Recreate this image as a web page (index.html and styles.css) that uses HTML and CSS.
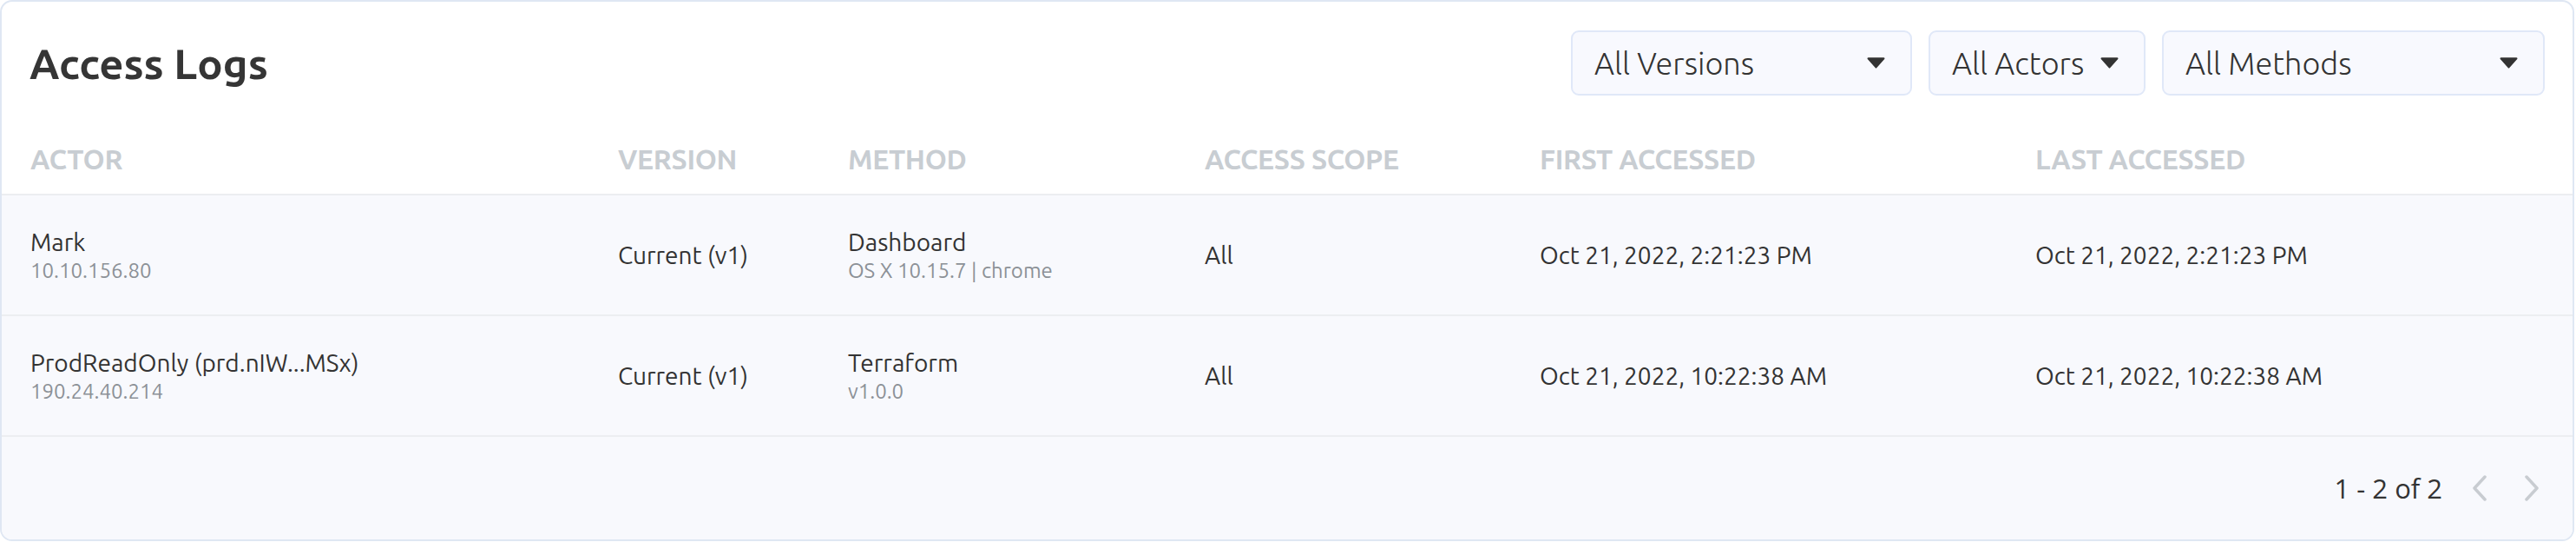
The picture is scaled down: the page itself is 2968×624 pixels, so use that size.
FILE: index.html
```html
<!DOCTYPE html>
<html lang="en">
<head>
<meta charset="utf-8">
<title>Access Logs</title>
<link rel="stylesheet" href="styles.css">
</head>
<body>
<section class="card">
  <header class="toolbar">
    <h1 class="title">Access Logs</h1>
    <div class="filters">
      <div class="select select-versions"><span>All Versions</span><svg class="caret" viewBox="0 0 20 13"><path d="M1.5 1h17a1 1 0 0 1 .8 1.6l-8.5 9.6a1 1 0 0 1-1.6 0L.7 2.6A1 1 0 0 1 1.5 1z"/></svg></div>
      <div class="select select-actors"><span>All Actors</span><svg class="caret" viewBox="0 0 20 13"><path d="M1.5 1h17a1 1 0 0 1 .8 1.6l-8.5 9.6a1 1 0 0 1-1.6 0L.7 2.6A1 1 0 0 1 1.5 1z"/></svg></div>
      <div class="select select-methods"><span>All Methods</span><svg class="caret" viewBox="0 0 20 13"><path d="M1.5 1h17a1 1 0 0 1 .8 1.6l-8.5 9.6a1 1 0 0 1-1.6 0L.7 2.6A1 1 0 0 1 1.5 1z"/></svg></div>
    </div>
  </header>

  <div class="table">
    <div class="row head">
      <div class="cell">ACTOR</div>
      <div class="cell">VERSION</div>
      <div class="cell">METHOD</div>
      <div class="cell">ACCESS SCOPE</div>
      <div class="cell">FIRST ACCESSED</div>
      <div class="cell">LAST ACCESSED</div>
    </div>
    <div class="row data">
      <div class="cell"><div class="main">Mark</div><div class="sub">10.10.156.80</div></div>
      <div class="cell"><div class="main">Current (v1)</div></div>
      <div class="cell"><div class="main">Dashboard</div><div class="sub">OS X 10.15.7 | chrome</div></div>
      <div class="cell"><div class="main">All</div></div>
      <div class="cell"><div class="main">Oct 21, 2022, 2:21:23 PM</div></div>
      <div class="cell"><div class="main">Oct 21, 2022, 2:21:23 PM</div></div>
    </div>
    <div class="row data">
      <div class="cell"><div class="main">ProdReadOnly (prd.nIW...MSx)</div><div class="sub">190.24.40.214</div></div>
      <div class="cell"><div class="main">Current (v1)</div></div>
      <div class="cell"><div class="main">Terraform</div><div class="sub">v1.0.0</div></div>
      <div class="cell"><div class="main">All</div></div>
      <div class="cell"><div class="main">Oct 21, 2022, 10:22:38 AM</div></div>
      <div class="cell"><div class="main">Oct 21, 2022, 10:22:38 AM</div></div>
    </div>
  </div>

  <footer class="pager">
    <span class="range">1 - 2 of 2</span>
    <svg class="chev" viewBox="0 0 18 30"><polyline points="15,2 3,15 15,28"/></svg>
    <svg class="chev" viewBox="0 0 18 30"><polyline points="3,2 15,15 3,28"/></svg>
  </footer>
</section>
</body>
</html>
```

FILE: styles.css
```css
* { box-sizing: border-box; }

html, body {
  margin: 0;
  padding: 0;
  background: #ffffff;
}

body {
  font-family: "Ubuntu", "Open Sans", "Noto Sans", sans-serif;
  color: #333333;
  width: 2968px;
  height: 624px;
}

.card {
  width: 2966px;
  height: 623px;
  border: 2px solid #dfe7f3;
  border-radius: 14px;
  overflow: hidden;
  background: #ffffff;
  display: flex;
  flex-direction: column;
}

.toolbar {
  display: flex;
  align-items: center;
  justify-content: space-between;
  padding: 32px 32px 0 32px;
  height: 108px;
}

.title {
  margin: 0;
  font-size: 49px;
  font-weight: 700;
  color: #353535;
  letter-spacing: 0;
}

.filters {
  display: flex;
  gap: 19px;
}

.select {
  height: 75px;
  display: flex;
  align-items: center;
  justify-content: space-between;
  padding: 0 29px 0 25px;
  background: #f8f9fe;
  border: 2px solid #e0e8f8;
  border-radius: 9px;
  font-size: 36px;
  font-weight: 300;
  color: #333333;
}

.select-versions { width: 393px; }
.select-actors { width: 250px; }
.select-methods { width: 441px; }

.caret {
  width: 21px;
  height: 14px;
  fill: #333333;
}

.table {
  display: flex;
  flex-direction: column;
}

.row {
  display: grid;
  grid-template-columns: 677px 265px 411px 386px 571px 1fr;
  padding-left: 33px;
}

.head {
  height: 115px;
  align-items: end;
  padding-bottom: 22px;
  font-size: 32px;
  font-weight: 600;
  color: #c8cdd2;
  border-bottom: 2px solid #eceef1;
  letter-spacing: -0.3px;
}

.data {
  height: 139px;
  align-items: center;
  background: #f8f9fd;
  border-bottom: 2px solid #eceef1;
}

.main {
  font-size: 28px;
  line-height: 36px;
  color: #333333;
}

.sub {
  font-size: 24px;
  line-height: 30px;
  color: #8c9197;
}

.pager {
  flex: 1;
  background: #f8f9fd;
  display: flex;
  align-items: center;
  justify-content: flex-end;
  padding: 0 38px 0 0;
}

.range {
  font-family: "Open Sans", "Noto Sans", sans-serif;
  font-size: 31px;
  color: #333333;
  margin-right: 34px;
}

.chev {
  width: 18px;
  height: 30px;
  fill: none;
  stroke: #c8ccd1;
  stroke-width: 3.5;
  stroke-linecap: round;
  stroke-linejoin: round;
}

.chev + .chev { margin-left: 42px; }
```
